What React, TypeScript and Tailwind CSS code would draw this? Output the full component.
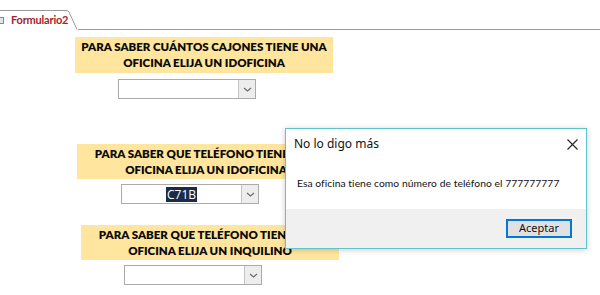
import React from 'react';

const Combo = ({ className, value }: { className: string; value?: string }) => (
  <div className={`flex h-[20px] w-[138px] border border-[#ababab] bg-white ${className}`}>
    <div className="flex flex-1 items-center justify-center">
      {value && (
        <span className="bg-[#1b2a45] px-[1px] text-[12px] leading-[15px] text-white [font-family:'Open_Sans',sans-serif]">
          {value}
        </span>
      )}
    </div>
    <div className="flex w-[17px] items-center justify-center border-l border-[#c4c4c4] bg-[#ededed]">
      <svg width="9" height="5" viewBox="0 0 9 5">
        <path d="M1 1l3.5 3L8 1" fill="none" stroke="#6b6b6b" strokeWidth="1.2" />
      </svg>
    </div>
  </div>
);

const Label = ({ className, lines }: { className: string; lines: string[] }) => (
  <div className={`flex h-[35px] w-[258px] flex-col items-center justify-center whitespace-nowrap bg-[#ffe59e] text-[11.5px] font-extrabold leading-[16px] text-[#0a0a0a] [font-family:Lato,sans-serif] ${className}`}>
    {lines.map((l) => (
      <span key={l}>{l}</span>
    ))}
  </div>
);

export default function App() {
  return (
    <div className="relative h-[295px] w-[600px] overflow-hidden bg-white">
      {/* Tab bar */}
      <div className="flex h-[30px] items-end">
        <div className="relative flex h-[20px] w-[78px] items-center">
          <svg className="absolute inset-0" width="78" height="20" viewBox="0 0 78 20">
            <path d="M0 0.5H66Q68 0.5 69 2L77 19.5" fill="none" stroke="#9a9a9a" />
          </svg>
          <div className="ml-[-2px] h-[7px] w-[6px] border border-[#8a8a8a] bg-[#dfe6ef]" />
          <span className="ml-[7px] whitespace-nowrap text-[11px] font-bold tracking-[-0.2px] text-[#a4262c] [font-family:Lato,sans-serif]">
            Formulario2
          </span>
        </div>
        <div className="h-[1px] flex-1 border-b border-[#9a9a9a]" />
      </div>

      {/* Form */}
      <div className="flex flex-col items-start">
        <Label className="ml-[75px] mt-[7px] h-[36px]" lines={['PARA SABER CUÁNTOS CAJONES TIENE UNA', 'OFICINA ELIJA UN IDOFICINA']} />
        <Combo className="ml-[118px] mt-[6px] h-[19px]" />
        <Label className="ml-[77px] mt-[45px]" lines={['PARA SABER QUE TELÉFONO TIENE UNA', 'OFICINA ELIJA UN IDOFICINA']} />
        <Combo className="ml-[121px] mt-[5px]" value="C71B" />
        <Label className="ml-[81px] mt-[21px]" lines={['PARA SABER QUE TELÉFONO TIENE UNA', 'OFICINA ELIJA UN INQUILINO']} />
        <Combo className="ml-[124px] mt-[5px]" />
      </div>

      {/* Message box */}
      <div className="absolute left-[285px] top-[128px] flex h-[121px] w-[302px] flex-col border border-[#5ec3cc] bg-white shadow-[0_1px_6px_rgba(0,0,0,0.2)] [font-family:'Noto_Sans',sans-serif]">
        <div className="flex h-[30px] items-center justify-between pl-[8px] pr-[8px]">
          <span className="text-[12px] text-[#111]">No lo digo más</span>
          <svg width="11" height="11" viewBox="0 0 11 11">
            <path d="M0.5 0.5l10 10M10.5 0.5l-10 10" stroke="#222" strokeWidth="1.1" />
          </svg>
        </div>
        <div className="flex flex-1 items-center whitespace-nowrap pl-[11px] text-[10.3px] tracking-[0.05px] text-[#111] [font-family:Lato,sans-serif]">
          Esa oficina tiene como número de teléfono el 777777777
        </div>
        <div className="flex h-[39px] items-center justify-end bg-[#f0f0f0] pr-[14px]">
          <button className="flex h-[19px] w-[66px] items-center justify-center border-2 border-[#0078d7] bg-[#e1e1e1] text-[11px] text-[#111]">
            Aceptar
          </button>
        </div>
      </div>
    </div>
  );
}
